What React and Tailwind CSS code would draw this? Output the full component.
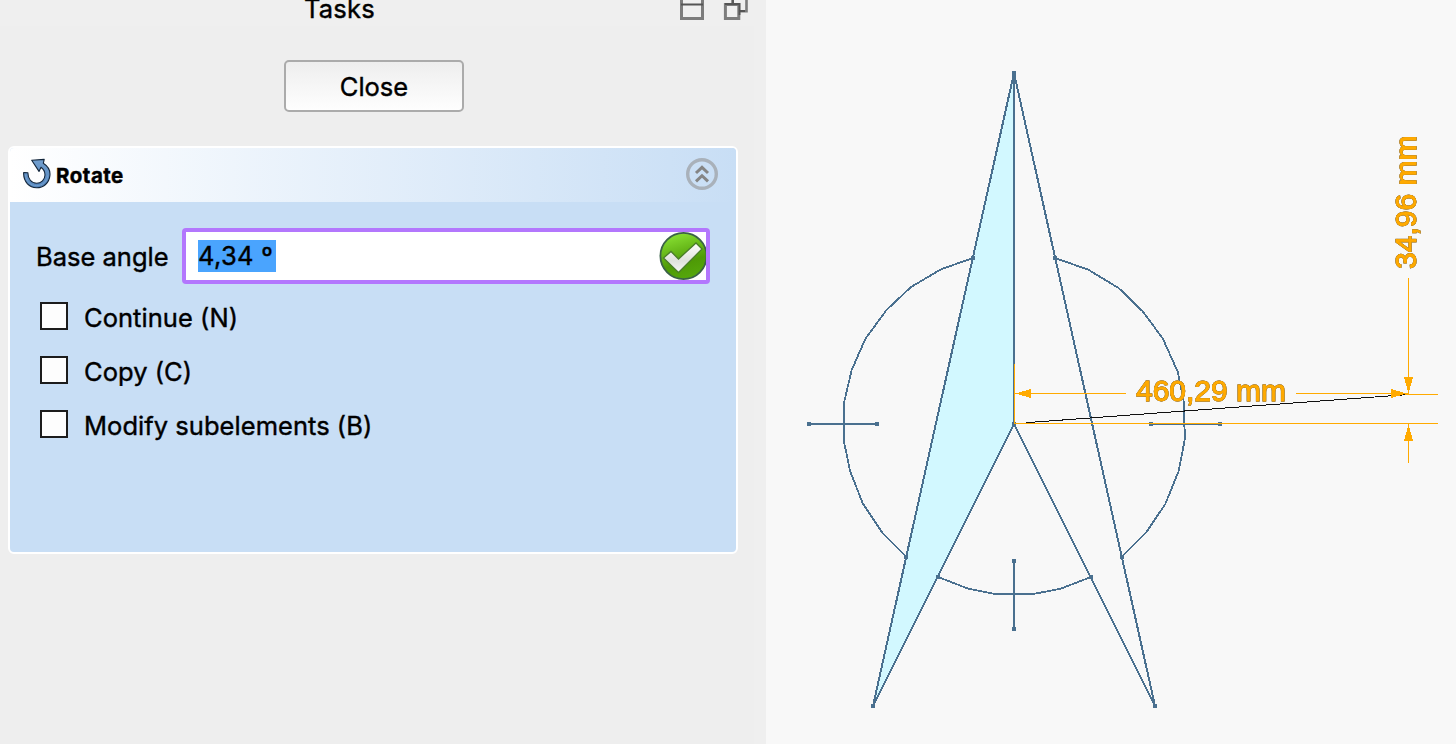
const LINE = '#4a708f';
const DIM = '#ffaa00';

function RotateIcon() {
  return (
    <svg className="-mt-[2px] h-8 w-7 shrink-0" viewBox="0 0 28 32">
      <defs>
        <linearGradient id="rot" x1="0" y1="0" x2="0" y2="1">
          <stop offset="0" stopColor="#729fcf" />
          <stop offset="1" stopColor="#5486bd" />
        </linearGradient>
      </defs>
      <path
        d="M8.7 2.3 L21.2 1.4 L20.3 5.3 C25 8.3 27.5 12.6 26.9 17.6 C26.1 25 20.5 29.8 13.6 29.8 C6.3 29.8 .8 24.2 .6 15.6 L.7 14.5 L4.9 14.8 C4.8 20.8 8.5 25.2 13.6 25.2 C18.3 25.2 21.9 21.6 22 17 C22 13.8 20.5 11.1 18 9.3 L16 13.4 Z"
        fill="url(#rot)"
        stroke="#12253a"
        strokeWidth="1.1"
        strokeLinejoin="round"
      />
      <path d="M2.6 17 C3.3 23.8 7.9 27.7 13.6 27.6 C19.7 27.6 24.4 23.2 24.7 17.2" fill="none" stroke="#729fcf" strokeWidth="1" />
    </svg>
  );
}

function CheckIcon() {
  return (
    <svg className="-mr-px h-12 w-[48px] shrink-0" viewBox="0 0 48 48">
      <defs>
        <linearGradient id="green" x1="0.3" y1="0" x2="0.6" y2="1">
          <stop offset="0" stopColor="#8ae234" />
          <stop offset="0.65" stopColor="#4e9a06" />
          <stop offset="1" stopColor="#56a80c" />
        </linearGradient>
        <linearGradient id="tick" x1="0" y1="0" x2="0" y2="1">
          <stop offset="0" stopColor="#ffffff" />
          <stop offset="0.6" stopColor="#dfe2dc" />
          <stop offset="1" stopColor="#f6f6f6" />
        </linearGradient>
      </defs>
      <circle cx="24.5" cy="24" r="23.1" fill="url(#green)" stroke="#3b6248" strokeWidth="1.8" />
      <path d="M4.5 26 L12 19.5 L19.5 27 L37 11 L43 17 L19.5 40.5 Z" fill="url(#tick)" stroke="#4a7d2a" strokeWidth="1.3" />
    </svg>
  );
}

function CollapseIcon() {
  return (
    <svg className="-mt-[2px] h-8 w-8 shrink-0" viewBox="0 0 32 32" fill="none">
      <circle cx="16" cy="16" r="14.3" stroke="#a9b1ba" strokeWidth="3.4" />
      <path d="M10 15 L16 9.3 L22 15 M10 23.4 L16 17.7 L22 23.4" stroke="#858585" strokeWidth="3" />
    </svg>
  );
}

function Option({ label }) {
  return (
    <label className="flex h-[54px] items-center">
      <span className="h-7 w-7 border-2 border-[#1c1c1c] bg-[#fdfdfd]" />
      <span className="ml-4 pt-[5px] whitespace-nowrap tracking-[0.04px]">{label}</span>
    </label>
  );
}

function TaskPanel() {
  return (
    <aside className="flex h-full w-[766px] shrink-0 flex-col bg-[#efefef] pr-3 [-webkit-text-stroke:0.4px_black]">
      <header className="flex h-[26px] items-start">
        <span className="-mt-[7px] ml-[304px] w-[376px] leading-8 tracking-[0.2px]">Tasks</span>
        <svg className="h-5 w-[68px]" viewBox="0 0 68 20" fill="none">
          <g stroke="#7c7c7c" strokeWidth="3">
            <path d="M1.5 0 V18.5 H22.5 V0" />
            <path d="M58 11.2 H66.5 V0 M52.5 0 V4" strokeWidth="2.6" />
            <path d="M45.4 4.4 H58.8 V18.5 H45.4 Z" />
          </g>
          <path d="M1 4.5 H23 M45 4 H59.5 V15 M53 0 V4 M60 11 H65" stroke="#545454" strokeWidth="1.8" />
        </svg>
      </header>
      <div className="flex flex-1 flex-col bg-[#eeeeee] pt-[34px] pl-2">
        <button className="ml-[276px] h-[52px] w-[180px] rounded-[5px] border-2 border-[#ababab] bg-linear-to-b from-[#eeeeee] to-[#fefefe] pt-[3px]">Close</button>
        <section className="mt-[34px] flex h-[408px] w-[730px] flex-col rounded-[6px] border-2 border-white bg-[#c8def5]">
          <div className="flex h-[54px] items-center rounded-t-[4px] bg-linear-to-r from-white to-[#c8def5] pl-[13px] pr-[18px]">
            <RotateIcon />
            <h2 className="ml-[5px] flex-1 pt-[3px] text-[20.5px] font-bold tracking-[0.5px]">Rotate</h2>
            <CollapseIcon />
          </div>
          <div className="mt-[26px] flex h-14 items-center pl-[26px]">
            <span className="w-[146px] whitespace-nowrap pt-[2px]">Base angle</span>
            <div className="flex h-14 w-[528px] items-center justify-between overflow-hidden rounded-[4px] border-4 border-[#b377fd] bg-white pl-3">
              <span className="h-8 w-[78px] whitespace-nowrap bg-[#4aa4fe] leading-8 tracking-[0.3px]">4,34 º</span>
              <CheckIcon />
            </div>
          </div>
          <div className="mt-[5px] flex flex-col pl-[30px]">
            <Option label="Continue (N)" />
            <Option label="Copy (C)" />
            <Option label="Modify subelements (B)" />
          </div>
        </section>
      </div>
    </aside>
  );
}

const NODES = [
  [1014, 73], [873, 706], [1155, 706], [1014, 424], [973, 258], [1055, 258], [906, 557], [1122, 557],
  [938, 577], [1091, 577], [809, 424], [877, 424], [1151, 424], [1220, 424], [1014, 561], [1014, 629],
];

function Drawing() {
  return (
    <svg className="h-full w-[690px] shrink-0 bg-[#f8f8f8]" viewBox="766 0 690 744">
      <g shapeRendering="crispEdges" fill="none" stroke={LINE} strokeWidth="2">
        <path d="M1014 73 L873 706 L1014 424 Z" fill="#d2f8ff" />
        <path d="M1014 73 L1155 706 L1014 424" />
        <path d="M973 258 L941 269.3 L911 287 L886.5 310 L865.3 339 L851.7 370 L844 402.7 V441.7 L850 470.7 L862.7 503.3 L882 532.3 L906 556.7" strokeWidth="1.8" />
        <path d="M1055 258 L1088.3 269.7 L1119 288.3 L1142.3 311 L1162.7 338.3 L1177.7 371.7 L1184 402.5 V423 L1185.3 436.7 L1178.7 471 L1165.3 504 L1146.7 531.7 L1122 556.7" strokeWidth="1.8" />
        <path d="M938 577 L968.3 588.7 L995 594 H1033.3 L1060.7 588.7 L1091 577" strokeWidth="1.8" />
        <path d="M809 424 H877 M1151 424 H1220 M1014 561 V629" />
      </g>
      <g shapeRendering="crispEdges" fill={LINE}>
        {NODES.map(([x, y]) => (
          <rect key={x + '-' + y} x={x - 2} y={y - 2} width="4" height="4" />
        ))}
      </g>
      <path d="M1026 422.7 L1408.5 394.5" stroke="#111111" strokeWidth="1" shapeRendering="crispEdges" />
      <g shapeRendering="crispEdges" fill="none" stroke={DIM} strokeWidth="1">
        <path d="M1014.5 364 V423.5 H1438 M1015 393.5 H1126 M1296 393.5 H1408 M1405 394.5 H1438 M1408.5 278 V394 M1408.5 424 V463" />
      </g>
      <g fill={DIM} shapeRendering="crispEdges">
        <path d="M1015 393.5 L1031 389 V398 Z" />
        <path d="M1407 393.5 L1391 389 V398 Z" />
        <path d="M1408.5 394 L1404 377 H1413 Z" />
        <path d="M1408.5 424 L1404 441 H1413 Z" />
      </g>
      <g
        className="[filter:drop-shadow(0_0_0.5px_#5f5850)_drop-shadow(0_0_0.4px_#8b8378)]"
        fontFamily="'Liberation Sans', Arial, sans-serif"
        fontSize="30"
        fill={DIM}
        stroke={DIM}
        strokeWidth="0.9"
      >
        <text x="1136" y="401" textLength="150">460,29 mm</text>
        <text transform="translate(1416 269) rotate(-90)" textLength="133.5">34,96 mm</text>
      </g>
    </svg>
  );
}

export default function App() {
  return (
    <main className="flex h-[744px] w-[1456px] overflow-hidden font-['Inter',sans-serif] text-[25.5px] text-black">
      <TaskPanel />
      <Drawing />
    </main>
  );
}
